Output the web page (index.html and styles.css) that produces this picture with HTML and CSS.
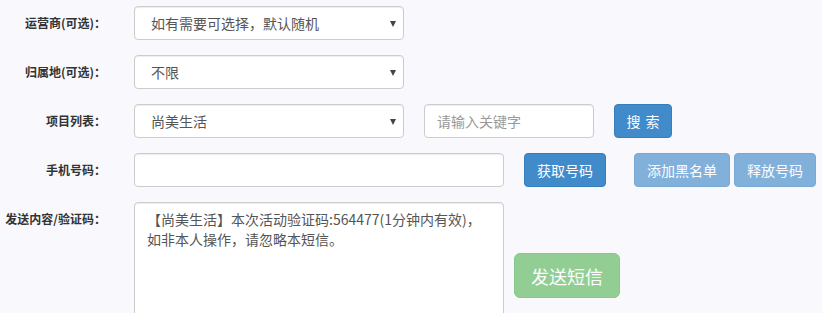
FILE: index.html
```html
<!DOCTYPE html>
<html lang="zh-CN">
<head>
    <meta charset="UTF-8">
    <title>接收短信</title>
    <link rel="stylesheet" href="styles.css">
</head>
<body>
<form class="sms-form">
    <div class="form-row">
        <label class="control-label">运营商(可选)：</label>
        <div class="select-wrap">
            <select class="form-control">
                <option>如有需要可选择，默认随机</option>
            </select>
        </div>
    </div>
    <div class="form-row">
        <label class="control-label">归属地(可选)：</label>
        <div class="select-wrap">
            <select class="form-control">
                <option>不限</option>
            </select>
        </div>
    </div>
    <div class="form-row">
        <label class="control-label">项目列表：</label>
        <div class="select-wrap">
            <select class="form-control">
                <option>尚美生活</option>
            </select>
        </div>
        <input type="text" class="form-control keyword" placeholder="请输入关键字">
        <button type="button" class="btn btn-primary btn-search">搜 索</button>
    </div>
    <div class="form-row">
        <label class="control-label">手机号码：</label>
        <input type="text" class="form-control phone">
        <button type="button" class="btn btn-primary btn-get">获取号码</button>
        <div class="btn-group">
            <button type="button" class="btn btn-primary" disabled>添加黑名单</button>
            <button type="button" class="btn btn-primary" disabled>释放号码</button>
        </div>
    </div>
    <div class="form-row">
        <label class="control-label">发送内容/验证码：</label>
        <textarea class="form-control message" rows="7">【尚美生活】本次活动验证码:564477(1分钟内有效)，如非本人操作，请忽略本短信。</textarea>
        <button type="button" class="btn btn-success btn-lg btn-send" disabled>发送短信</button>
    </div>
</form>
</body>
</html>
```

FILE: styles.css
```css
* {
    box-sizing: border-box;
}

body {
    margin: 0;
    background: #f9f9fd;
    color: #333;
    font-family: "Noto Sans CJK SC", "Liberation Sans", sans-serif;
    font-size: 14px;
    line-height: 20px;
}

.sms-form {
    padding-top: 6px;
}

.form-row {
    display: flex;
    align-items: flex-start;
    margin-bottom: 15px;
}

.control-label {
    width: 106px;
    padding-top: 7px;
    margin-right: 28px;
    text-align: right;
    font-size: 12px;
    font-weight: bold;
    white-space: nowrap;
}

.form-control {
    display: block;
    height: 34px;
    padding: 6px 12px;
    font-family: inherit;
    font-size: 14px;
    line-height: 20px;
    color: #555;
    background: #fff;
    border: 1px solid #ccc;
    border-radius: 4px;
    box-shadow: inset 0 1px 1px rgba(0,0,0,0.075);
}

.form-control::placeholder {
    color: #999;
}

.select-wrap {
    position: relative;
    width: 270px;
}

.select-wrap select {
    width: 100%;
    padding-left: 16px;
    appearance: none;
    -webkit-appearance: none;
}

/* стрелка селекта */
.select-wrap::after {
    content: '';
    position: absolute;
    right: 8px;
    top: 15px;
    border-left: 3.5px solid transparent;
    border-right: 3.5px solid transparent;
    border-top: 6px solid #444;
    pointer-events: none;
}

.keyword {
    width: 170px;
    margin-left: 20px;
}

.phone {
    width: 370px;
}

.message {
    width: 370px;
    height: 148px;
    resize: none;
}

.btn {
    display: inline-block;
    height: 34px;
    padding: 6px 12px;
    font-family: inherit;
    font-size: 14px;
    line-height: 20px;
    color: #fff;
    border: 1px solid transparent;
    border-radius: 4px;
    white-space: nowrap;
    cursor: pointer;
}

.btn[disabled] {
    opacity: 0.65;
    cursor: not-allowed;
}

.btn-primary {
    background: #428bca;
    border-color: #357ebd;
}

.btn-success {
    background: #5cb85c;
    border-color: #4cae4c;
}

.btn-lg {
    height: 45px;
    padding: 10px 16px;
    font-size: 18px;
    line-height: 24px;
    border-radius: 6px;
}

.btn-search {
    width: 58px;
    padding: 6px 0;
    margin-left: 20px;
    word-spacing: 2px;
}

.btn-get {
    margin-left: 20px;
}

.btn-group {
    display: flex;
    gap: 4px;
    margin-left: 28px;
}

.btn-send {
    margin-left: 10px;
    margin-top: 51px;
}
```
